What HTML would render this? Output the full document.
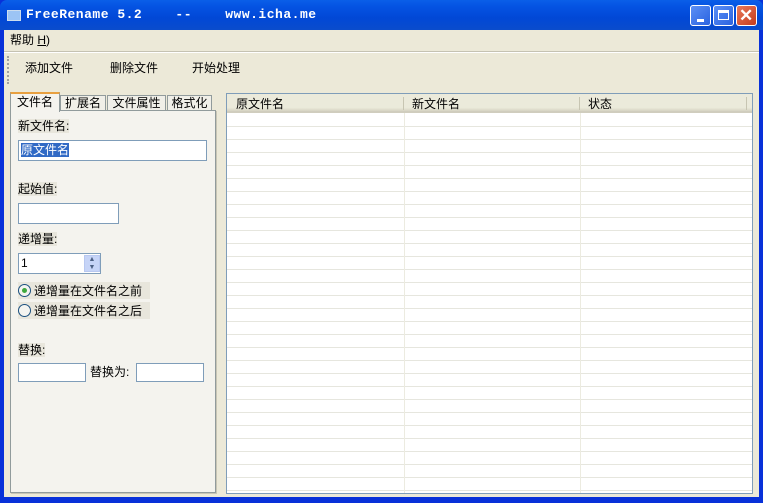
<!DOCTYPE html>
<html><head><meta charset="utf-8"><style>
*{margin:0;padding:0;box-sizing:border-box}
body{width:763px;height:503px;overflow:hidden;font-family:"Liberation Sans","Noto Sans CJK SC",sans-serif;font-size:12px;line-height:14px;color:#000;position:relative;background:#0831d9}
.a{position:absolute}
.win{left:4px;top:30px;width:755px;height:467px;background:#ece9d8}
.title{left:0;top:0;width:763px;height:30px;background:linear-gradient(#0a5fe8,#0554e3 20%,#0148d6 60%,#0a4ccc);border-radius:7px 7px 0 0}
.tt{left:26px;top:8px;color:#fff;font-family:"Liberation Mono",monospace;font-weight:bold;font-size:13px;letter-spacing:0.5px;white-space:pre}
.btn{top:5px;width:21px;height:21px;border:1px solid #fff;border-radius:3px;background:linear-gradient(135deg,#5b8ff5,#2a63e0)}
.inp{background:#fff;border:1px solid #7f9db9}
.lbl{background:#e8e6dc}
.rb{width:13px;height:13px;border:1px solid #1c5180;border-radius:50%;background:#f4f4f0}
</style></head><body>
<div class="a title"></div>
<div class="a" style="left:7px;top:10px;width:14px;height:11px;background:#9cc4f4;border:1px solid #cde"></div>
<div class="a tt">FreeRename 5.2    --    www.icha.me</div>
<div class="a btn" style="left:690px"><div class="a" style="left:6px;top:13px;width:7px;height:3px;background:#fff"></div></div>
<div class="a btn" style="left:713px"><div class="a" style="left:4px;top:4px;width:11px;height:10px;border:1px solid #fff;border-top:3px solid #fff"></div></div>
<div class="a btn" style="left:736px;background:linear-gradient(135deg,#e8795a,#c63c1d)"><div class="a" style="left:2px;top:0;color:#fff;font-size:17px;font-weight:bold;line-height:19px">✕</div></div>
<div class="a win"></div>
<div class="a" style="left:10px;top:33px">帮助 <u>H</u>)</div>
<div class="a" style="left:4px;top:51px;width:755px;height:1px;background:#c5c2b2"></div>
<div class="a" style="left:4px;top:52px;width:755px;height:1px;background:#fff"></div>
<div class="a" style="left:7px;top:56px;width:2px;height:28px;border-left:2px dotted #a0a0a0"></div>
<div class="a" style="left:25px;top:61px">添加文件</div>
<div class="a" style="left:110px;top:61px">删除文件</div>
<div class="a" style="left:192px;top:61px">开始处理</div>
<div class="a" style="left:10px;top:110px;width:206px;height:383px;background:#f4f3ee;border:1px solid #919b9c;box-shadow:1px 1px 0 #c8c5b5"></div>
<div class="a" style="left:10px;top:92px;width:50px;height:20px;background:#f4f3ee;border:1px solid #919b9c;border-bottom:none;border-top:2px solid #e8a040;text-align:center;line-height:17px">文件名</div>
<div class="a" style="left:60px;top:95px;width:46px;height:16px;background:#f0efe8;border:1px solid #919b9c;text-align:center;line-height:14px">扩展名</div>
<div class="a" style="left:107px;top:95px;width:59px;height:16px;background:#f0efe8;border:1px solid #919b9c;text-align:center;line-height:14px">文件属性</div>
<div class="a" style="left:167px;top:95px;width:45px;height:16px;background:#f0efe8;border:1px solid #919b9c;text-align:center;line-height:14px">格式化</div>
<div class="a lbl" style="left:18px;top:119px">新文件名:</div>
<div class="a inp" style="left:18px;top:140px;width:189px;height:21px"><span style="background:#316ac5;color:#fff;margin-left:2px;line-height:18px">原文件名</span></div>
<div class="a lbl" style="left:18px;top:182px">起始值:</div>
<div class="a inp" style="left:18px;top:203px;width:101px;height:21px"></div>
<div class="a lbl" style="left:18px;top:232px">递增量:</div>
<div class="a inp" style="left:18px;top:253px;width:83px;height:21px;padding-left:2px;line-height:18px">1</div>
<div class="a" style="left:84px;top:255px;width:16px;height:17px;background:#c6d4f7;border:1px solid #b8c8f0;font-size:7px;color:#4d6185;text-align:center;line-height:8px">▲<br>▼</div>
<div class="a lbl" style="left:18px;top:282px;width:132px;height:17px"></div>
<div class="a rb" style="left:18px;top:284px"><div class="a" style="left:3px;top:3px;width:5px;height:5px;border-radius:50%;background:#3fa93f"></div></div>
<div class="a" style="left:34px;top:284px">递增量在文件名之前</div>
<div class="a lbl" style="left:18px;top:302px;width:132px;height:17px"></div>
<div class="a rb" style="left:18px;top:304px"></div>
<div class="a" style="left:34px;top:304px">递增量在文件名之后</div>
<div class="a lbl" style="left:18px;top:343px">替换:</div>
<div class="a inp" style="left:18px;top:363px;width:68px;height:19px"></div>
<div class="a" style="left:90px;top:365px">替换为:</div>
<div class="a inp" style="left:136px;top:363px;width:68px;height:19px"></div>
<div class="a" style="left:226px;top:93px;width:527px;height:401px;background:#fff;border:1px solid #7f9db9;overflow:hidden;
background-image:linear-gradient(90deg,transparent 177px,#ecebe0 177px,#ecebe0 178px,transparent 178px,transparent 353px,#ecebe0 353px,#ecebe0 354px,transparent 354px),repeating-linear-gradient(180deg,transparent 0,transparent 12px,#e6e6de 12px,#e6e6de 13px);background-position:0 0,0 20px">
<div class="a" style="left:0;top:0;width:525px;height:19px;background:linear-gradient(#ebeadb,#ebeadb 80%,#d6d3c2);border-bottom:2px solid #d0cdbe"></div>
<div class="a" style="left:9px;top:3px">原文件名</div>
<div class="a" style="left:176px;top:3px;width:1px;height:13px;background:#c7c5b2"></div>
<div class="a" style="left:185px;top:3px">新文件名</div>
<div class="a" style="left:352px;top:3px;width:1px;height:13px;background:#c7c5b2"></div>
<div class="a" style="left:361px;top:3px">状态</div>
<div class="a" style="left:519px;top:3px;width:1px;height:13px;background:#c7c5b2"></div>
</div>
</body></html>
